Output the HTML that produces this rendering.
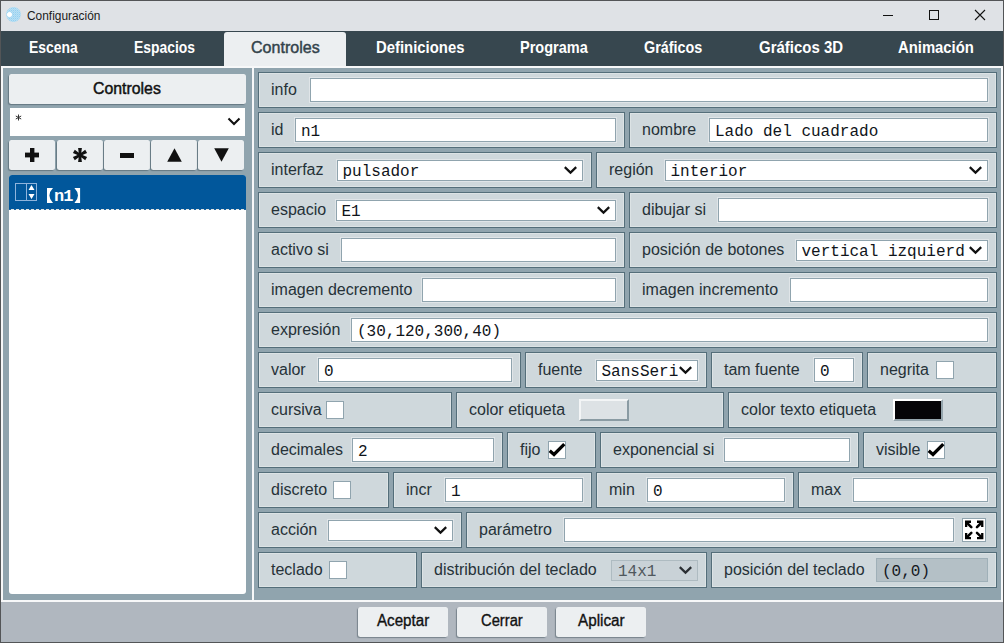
<!DOCTYPE html><html><head><meta charset="utf-8"><title>Configuración</title><style>
*{margin:0;padding:0;box-sizing:border-box}
html,body{width:1004px;height:643px;overflow:hidden;background:#535557}
body{position:relative;font-family:"Liberation Sans",sans-serif;color:#263238}
.abs{position:absolute}
.t{position:absolute;white-space:nowrap;transform-origin:0 0}
#title{left:1px;top:1px;width:1002px;height:30px;background:#dfe2e6}
#tabs{left:1px;top:31px;width:1002px;height:35px;background:#37474f}
#acttab{left:224px;top:32px;width:122px;height:35px;background:#eceff1;border-radius:3px 3px 0 0}
#content{left:1px;top:66px;width:1002px;height:536px;background:#f7f8f9}
.panel{background:#90a4ae}
#bottom{left:1px;top:602px;width:1002px;height:40px;background:#b0b7bf}
.btn{position:absolute;background:#eceff1;border-radius:2.5px;box-shadow:-1px 1px 1px rgba(40,60,70,.42)}
.row{position:absolute;height:36px;background:#cfd8dc;border:1px solid #546e7a;box-shadow:inset 0 0 0 1px rgba(255,255,255,.28)}
.lbl{position:absolute;top:0;height:34px;line-height:34px;font-size:16px;color:#263238;white-space:nowrap}
.inp{position:absolute;top:5px;height:24px;background:#fff;border:1px solid #90a4ae;box-shadow:0 0 0 1px rgba(255,255,255,.35);font-family:"Liberation Mono",monospace;font-size:16px;line-height:26px;padding-left:5px;color:#10141a;white-space:nowrap;overflow:hidden}
.sel{position:absolute;top:7px;height:21px;background:#fff;border:1px solid #90a4ae;box-shadow:0 0 0 1px rgba(255,255,255,.35);font-family:"Liberation Mono",monospace;font-size:16px;line-height:23px;color:#10141a;white-space:nowrap}
.sel span{position:absolute;left:4.5px;top:0;overflow:hidden}
.chev{position:absolute;top:50%;margin-top:-5px;width:13px;height:8px;overflow:visible}
.chk{position:absolute;top:8px;width:18px;height:18px;background:#fff;border:1px solid #90a4ae}
</style></head><body>
<div id="title" class="abs"></div>
<svg class="abs" style="left:5px;top:6px" width="18" height="18" viewBox="0 0 18 18"><defs><pattern id="ht" width="2" height="2" patternUnits="userSpaceOnUse"><rect width="2" height="2" fill="#b8e0f4"/><rect width="1" height="1" fill="#94cff1"/><rect x="1" y="1" width="1" height="1" fill="#a8d8f2"/></pattern></defs><circle cx="8.5" cy="8.5" r="7.4" fill="url(#ht)"/><circle cx="4.5" cy="8.5" r="2.5" fill="#fff"/></svg>
<div class="t" style="left:26.60px;top:9.37px;font-size:12.5px;line-height:15px;font-weight:normal;color:#1a1a1a;transform:scaleX(0.9517);">Configuración</div>
<div class="abs" style="left:883px;top:15px;width:10px;height:1px;background:#111"></div>
<div class="abs" style="left:929px;top:10px;width:10px;height:10px;border:1px solid #111"></div>
<svg class="abs" style="left:974px;top:9px" width="12" height="12" viewBox="0 0 12 12"><path d="M1 1L11 11M11 1L1 11" stroke="#111" stroke-width="1.1"/></svg>
<div id="tabs" class="abs"></div>
<div id="acttab" class="abs"></div>
<div class="t" style="left:29.20px;top:37.28px;font-size:16.5px;line-height:20px;font-weight:bold;color:#ffffff;transform:scaleX(0.8437);">Escena</div>
<div class="t" style="left:134.20px;top:37.28px;font-size:16.5px;line-height:20px;font-weight:bold;color:#ffffff;transform:scaleX(0.8421);">Espacios</div>
<div class="t" style="left:250.50px;top:37.28px;font-size:16.5px;line-height:20px;font-weight:normal;color:#33434b;transform:scaleX(0.9728);-webkit-text-stroke:0.45px #33434b">Controles</div>
<div class="t" style="left:375.50px;top:37.28px;font-size:16.5px;line-height:20px;font-weight:bold;color:#ffffff;transform:scaleX(0.9015);">Definiciones</div>
<div class="t" style="left:520.00px;top:37.28px;font-size:16.5px;line-height:20px;font-weight:bold;color:#ffffff;transform:scaleX(0.8806);">Programa</div>
<div class="t" style="left:643.60px;top:37.28px;font-size:16.5px;line-height:20px;font-weight:bold;color:#ffffff;transform:scaleX(0.8718);">Gráficos</div>
<div class="t" style="left:758.50px;top:37.28px;font-size:16.5px;line-height:20px;font-weight:bold;color:#ffffff;transform:scaleX(0.9075);">Gráficos 3D</div>
<div class="t" style="left:897.60px;top:37.28px;font-size:16.5px;line-height:20px;font-weight:bold;color:#ffffff;transform:scaleX(0.8990);">Animación</div>
<div id="content" class="abs"></div>
<div class="abs panel" style="left:3px;top:68px;width:249px;height:532px"></div>
<div class="abs panel" style="left:254px;top:68px;width:747px;height:532px"></div>
<div id="bottom" class="abs"></div>
<div class="btn" style="left:9px;top:74px;width:237px;height:30px;border-radius:2.5px"></div>
<div class="t" style="left:93.40px;top:78.96px;font-size:16px;line-height:19px;font-weight:normal;color:#111;transform:scaleX(0.9901);-webkit-text-stroke:0.45px #111">Controles</div>
<div class="abs" style="left:10px;top:108px;width:235px;height:28px;background:#fff"></div>
<svg class="abs" style="left:15px;top:114px" width="8" height="8" viewBox="0 0 8 8"><path d="M3.5 0.5V6.5M0.8 2L6.2 5M0.8 5L6.2 2" stroke="#333" stroke-width="1"/></svg>
<svg class="abs" style="left:227px;top:117px" width="14" height="9" viewBox="0 0 14 9"><path d="M1.5 1.5L7 7L12.5 1.5" fill="none" stroke="#111" stroke-width="2.1"/></svg>
<div class="btn" style="left:9px;top:140px;width:46px;height:30px"></div>
<div class="btn" style="left:56.5px;top:140px;width:46px;height:30px"></div>
<div class="btn" style="left:104px;top:140px;width:46px;height:30px"></div>
<div class="btn" style="left:151.2px;top:140px;width:46px;height:30px"></div>
<div class="btn" style="left:198.3px;top:140px;width:46px;height:30px"></div>
<svg class="abs" style="left:25px;top:148px" width="14" height="14"><rect x="5" y="0" width="4.4" height="14" fill="#111"/><rect x="0" y="4.6" width="14" height="4.8" fill="#111"/></svg>
<svg class="abs" style="left:72px;top:147px" width="16" height="16" viewBox="0 0 16 16" overflow="visible"><circle cx="8" cy="8" r="1.5" fill="#111"/><path d="M7.05 8.30 L8.95 8.30 L9.90 0.90 L6.10 0.90Z M7.27 7.33 L8.22 8.97 L15.10 6.10 L13.20 2.80Z M8.22 7.03 L7.27 8.67 L13.20 13.20 L15.10 9.90Z M8.95 7.70 L7.05 7.70 L6.10 15.10 L9.90 15.10Z M8.73 8.67 L7.78 7.03 L0.90 9.90 L2.80 13.20Z M7.78 8.97 L8.73 7.33 L2.80 2.80 L0.90 6.10Z" fill="#111"/></svg>
<div class="abs" style="left:120px;top:152.5px;width:14px;height:5px;background:#111"></div>
<svg class="abs" style="left:167px;top:148px" width="15" height="14"><path d="M7.5 0.3L14.8 13.8H0.2Z" fill="#111"/></svg>
<svg class="abs" style="left:214px;top:148px" width="15" height="14"><path d="M0.2 0.3H14.8L7.5 13.8Z" fill="#111"/></svg>
<div class="abs" style="left:9px;top:175px;width:237px;height:419px;background:#fff;border-radius:3px"></div>
<div class="abs" style="left:9px;top:175px;width:237px;height:34px;background:#01579b;border-radius:3px 3px 0 0"></div>
<div class="abs" style="left:9px;top:209px;width:237px;height:1px;background:repeating-linear-gradient(90deg,#1b64a3 0 2px,#e4e6e2 2px 5px)"></div>
<svg class="abs" style="left:15px;top:183px" width="23" height="19" viewBox="0 0 23 19"><rect x="0.5" y="0.5" width="21" height="17" fill="none" stroke="#8fb4dc"/><line x1="11.5" y1="0.5" x2="11.5" y2="17.5" stroke="#8fb4dc"/><path d="M13.5 7L16.5 2L19.5 7Z M13.5 11L16.5 16L19.5 11Z" fill="#fff"/></svg>
<svg class="abs" style="left:46.8px;top:188px" width="34" height="15" viewBox="0 0 34 15"><path d="M0 0H6Q-1.2 7.5 6 15H0Z M33.1 0H27.4Q34.6 7.5 27.4 15H33.1Z" fill="#fff"/></svg>
<div class="abs" style="left:54px;top:188px;font-family:'Liberation Mono',monospace;font-weight:bold;font-size:17px;color:#fff;line-height:18px;letter-spacing:-1px">n1</div>
<div class="btn" style="left:358px;top:607px;width:90px;height:30px"></div>
<div class="t" style="left:377.10px;top:611.16px;font-size:16px;line-height:19px;font-weight:normal;color:#111;transform:scaleX(0.9475);-webkit-text-stroke:0.35px #111">Aceptar</div>
<div class="btn" style="left:457px;top:607px;width:90px;height:30px"></div>
<div class="t" style="left:481.40px;top:611.16px;font-size:16px;line-height:19px;font-weight:normal;color:#111;transform:scaleX(0.9209);-webkit-text-stroke:0.35px #111">Cerrar</div>
<div class="btn" style="left:556px;top:607px;width:90px;height:30px"></div>
<div class="t" style="left:577.70px;top:611.16px;font-size:16px;line-height:19px;font-weight:normal;color:#111;transform:scaleX(0.9538);-webkit-text-stroke:0.35px #111">Aplicar</div>
<div class="row" style="left:258px;top:72px;width:739px"><div class="lbl" style="left:12px">info</div><div class="inp" style="left:51px;width:678px"></div></div>
<div class="row" style="left:258px;top:112px;width:367px"><div class="lbl" style="left:12px">id</div><div class="inp" style="left:36px;width:321px">n1</div></div>
<div class="row" style="left:629px;top:112px;width:368px"><div class="lbl" style="left:12px">nombre</div><div class="inp" style="left:79px;width:279px">Lado del cuadrado</div></div>
<div class="row" style="left:258px;top:152px;width:334px"><div class="lbl" style="left:12px">interfaz</div><div class="sel" style="left:78px;width:246px"><span>pulsador</span><svg class="chev" style="right:5px" viewBox="0 0 13 8"><path d="M0.8 1.1L6.5 6.6L12.2 1.1" fill="none" stroke="#111" stroke-width="2.2"/></svg></div></div>
<div class="row" style="left:596px;top:152px;width:401px"><div class="lbl" style="left:12px">región</div><div class="sel" style="left:68px;width:323px"><span>interior</span><svg class="chev" style="right:5px" viewBox="0 0 13 8"><path d="M0.8 1.1L6.5 6.6L12.2 1.1" fill="none" stroke="#111" stroke-width="2.2"/></svg></div></div>
<div class="row" style="left:258px;top:192px;width:367px"><div class="lbl" style="left:12px">espacio</div><div class="sel" style="left:77px;width:280px"><span>E1</span><svg class="chev" style="right:5px" viewBox="0 0 13 8"><path d="M0.8 1.1L6.5 6.6L12.2 1.1" fill="none" stroke="#111" stroke-width="2.2"/></svg></div></div>
<div class="row" style="left:629px;top:192px;width:368px"><div class="lbl" style="left:12px">dibujar si</div><div class="inp" style="left:88px;width:270px"></div></div>
<div class="row" style="left:258px;top:232px;width:367px"><div class="lbl" style="left:12px">activo si</div><div class="inp" style="left:82px;width:275px"></div></div>
<div class="row" style="left:629px;top:232px;width:368px"><div class="lbl" style="left:12px">posición de botones</div><div class="sel" style="left:166px;width:192px"><span>vertical izquierd</span><svg class="chev" style="right:5px" viewBox="0 0 13 8"><path d="M0.8 1.1L6.5 6.6L12.2 1.1" fill="none" stroke="#111" stroke-width="2.2"/></svg></div></div>
<div class="row" style="left:258px;top:272px;width:367px"><div class="lbl" style="left:12px">imagen decremento</div><div class="inp" style="left:163px;width:194px"></div></div>
<div class="row" style="left:629px;top:272px;width:368px"><div class="lbl" style="left:12px">imagen incremento</div><div class="inp" style="left:160px;width:198px"></div></div>
<div class="row" style="left:258px;top:312px;width:739px"><div class="lbl" style="left:12px">expresión</div><div class="inp" style="left:92px;width:637px">(30,120,300,40)</div></div>
<div class="row" style="left:258px;top:352px;width:263px"><div class="lbl" style="left:12px">valor</div><div class="inp" style="left:59px;width:194px">0</div></div>
<div class="row" style="left:525px;top:352px;width:182px"><div class="lbl" style="left:12px">fuente</div><div class="sel" style="left:70px;width:102px"><span>SansSeri</span><svg class="chev" style="right:5px" viewBox="0 0 13 8"><path d="M0.8 1.1L6.5 6.6L12.2 1.1" fill="none" stroke="#111" stroke-width="2.2"/></svg></div></div>
<div class="row" style="left:711px;top:352px;width:152px"><div class="lbl" style="left:12px">tam fuente</div><div class="inp" style="left:102px;width:40px">0</div></div>
<div class="row" style="left:867px;top:352px;width:130px"><div class="lbl" style="left:12px">negrita</div><div class="chk" style="left:68px"></div></div>
<div class="row" style="left:258px;top:392px;width:194px"><div class="lbl" style="left:12px">cursiva</div><div class="chk" style="left:67px"></div></div>
<div class="row" style="left:456px;top:392px;width:268px"><div class="lbl" style="left:12px">color etiqueta</div><div style="position:absolute;top:6px;width:50px;height:22px;border-style:solid;border-width:2px 2px 2px 2px;left:122px;background:#dde2e5;border-color:#f3f5f6 #8a9ba3 #8a9ba3 #f3f5f6"></div></div>
<div class="row" style="left:728px;top:392px;width:269px"><div class="lbl" style="left:12px">color texto etiqueta</div><div style="position:absolute;top:6px;width:50px;height:22px;border-style:solid;border-width:2px 2px 2px 2px;left:164px;background:#050407;border-color:#ffffff #95a5ad #95a5ad #ffffff"></div></div>
<div class="row" style="left:258px;top:432px;width:245px"><div class="lbl" style="left:12px">decimales</div><div class="inp" style="left:93px;width:142px">2</div></div>
<div class="row" style="left:507px;top:432px;width:89px"><div class="lbl" style="left:12px">fijo</div><div class="chk" style="left:40px"><svg width="20" height="18" viewBox="0 0 20 18" style="position:absolute;left:-1px;top:-1px;overflow:visible"><path d="M1.7 9.7L6 13.4L16.3 3.2" fill="none" stroke="#000" stroke-width="3.3"/></svg></div></div>
<div class="row" style="left:600px;top:432px;width:259px"><div class="lbl" style="left:12px">exponencial si</div><div class="inp" style="left:123px;width:126px"></div></div>
<div class="row" style="left:863px;top:432px;width:134px"><div class="lbl" style="left:12px">visible</div><div class="chk" style="left:63px"><svg width="20" height="18" viewBox="0 0 20 18" style="position:absolute;left:-1px;top:-1px;overflow:visible"><path d="M1.7 9.7L6 13.4L16.3 3.2" fill="none" stroke="#000" stroke-width="3.3"/></svg></div></div>
<div class="row" style="left:258px;top:472px;width:131px"><div class="lbl" style="left:12px">discreto</div><div class="chk" style="left:74px"></div></div>
<div class="row" style="left:393px;top:472px;width:199px"><div class="lbl" style="left:12px">incr</div><div class="inp" style="left:51px;width:138px">1</div></div>
<div class="row" style="left:596px;top:472px;width:198px"><div class="lbl" style="left:12px">min</div><div class="inp" style="left:50px;width:138px">0</div></div>
<div class="row" style="left:798px;top:472px;width:199px"><div class="lbl" style="left:12px">max</div><div class="inp" style="left:54px;width:135px"></div></div>
<div class="row" style="left:258px;top:512px;width:204px"><div class="lbl" style="left:12px">acción</div><div class="sel" style="left:69px;width:125px"><span></span><svg class="chev" style="right:5px" viewBox="0 0 13 8"><path d="M0.8 1.1L6.5 6.6L12.2 1.1" fill="none" stroke="#111" stroke-width="2.2"/></svg></div></div>
<div class="row" style="left:466px;top:512px;width:531px"><div class="lbl" style="left:12px">parámetro</div><div class="inp" style="left:97px;width:390px"></div><svg style="position:absolute;left:495px;top:5px" width="24" height="24" viewBox="0 0 24 24"><rect x="0.5" y="0.5" width="23" height="23" fill="#fff" stroke="#90a4ae"/><g fill="none" stroke="#000" stroke-width="2.3" stroke-linejoin="miter"><path d="M4.15 9.1V3.75H9"/><path d="M20.25 9.1V3.75H15"/><path d="M4.15 14.9V20.15H9"/><path d="M20.25 14.9V20.15H15"/></g><g stroke="#000" stroke-width="2.6" stroke-linecap="round"><path d="M5 4.8L9.3 9.1M19.4 4.8L15 9.1M5 19.1L9.3 14.9M19.4 19.1L15 14.9"/></g></svg></div>
<div class="row" style="left:258px;top:552px;width:159px"><div class="lbl" style="left:12px">teclado</div><div class="chk" style="left:70px"></div></div>
<div class="row" style="left:421px;top:552px;width:286px"><div class="lbl" style="left:12px">distribución del teclado</div><div class="sel" style="left:189px;width:87px;background:#c9d2d7;border-color:#aebbc1;color:#50585d;box-shadow:none"><span style="left:6px">14x1</span><svg class="chev" style="right:5px" viewBox="0 0 13 8"><path d="M0.8 1.1L6.5 6.6L12.2 1.1" fill="none" stroke="#2b2f33" stroke-width="2.2"/></svg></div></div>
<div class="row" style="left:711px;top:552px;width:286px"><div class="lbl" style="left:12px">posición del teclado</div><div class="inp" style="left:164px;width:112px;background:#b4c0c6;border-color:#9fb0b8;color:#14181e;box-shadow:none">(0,0)</div></div>
</body></html>
